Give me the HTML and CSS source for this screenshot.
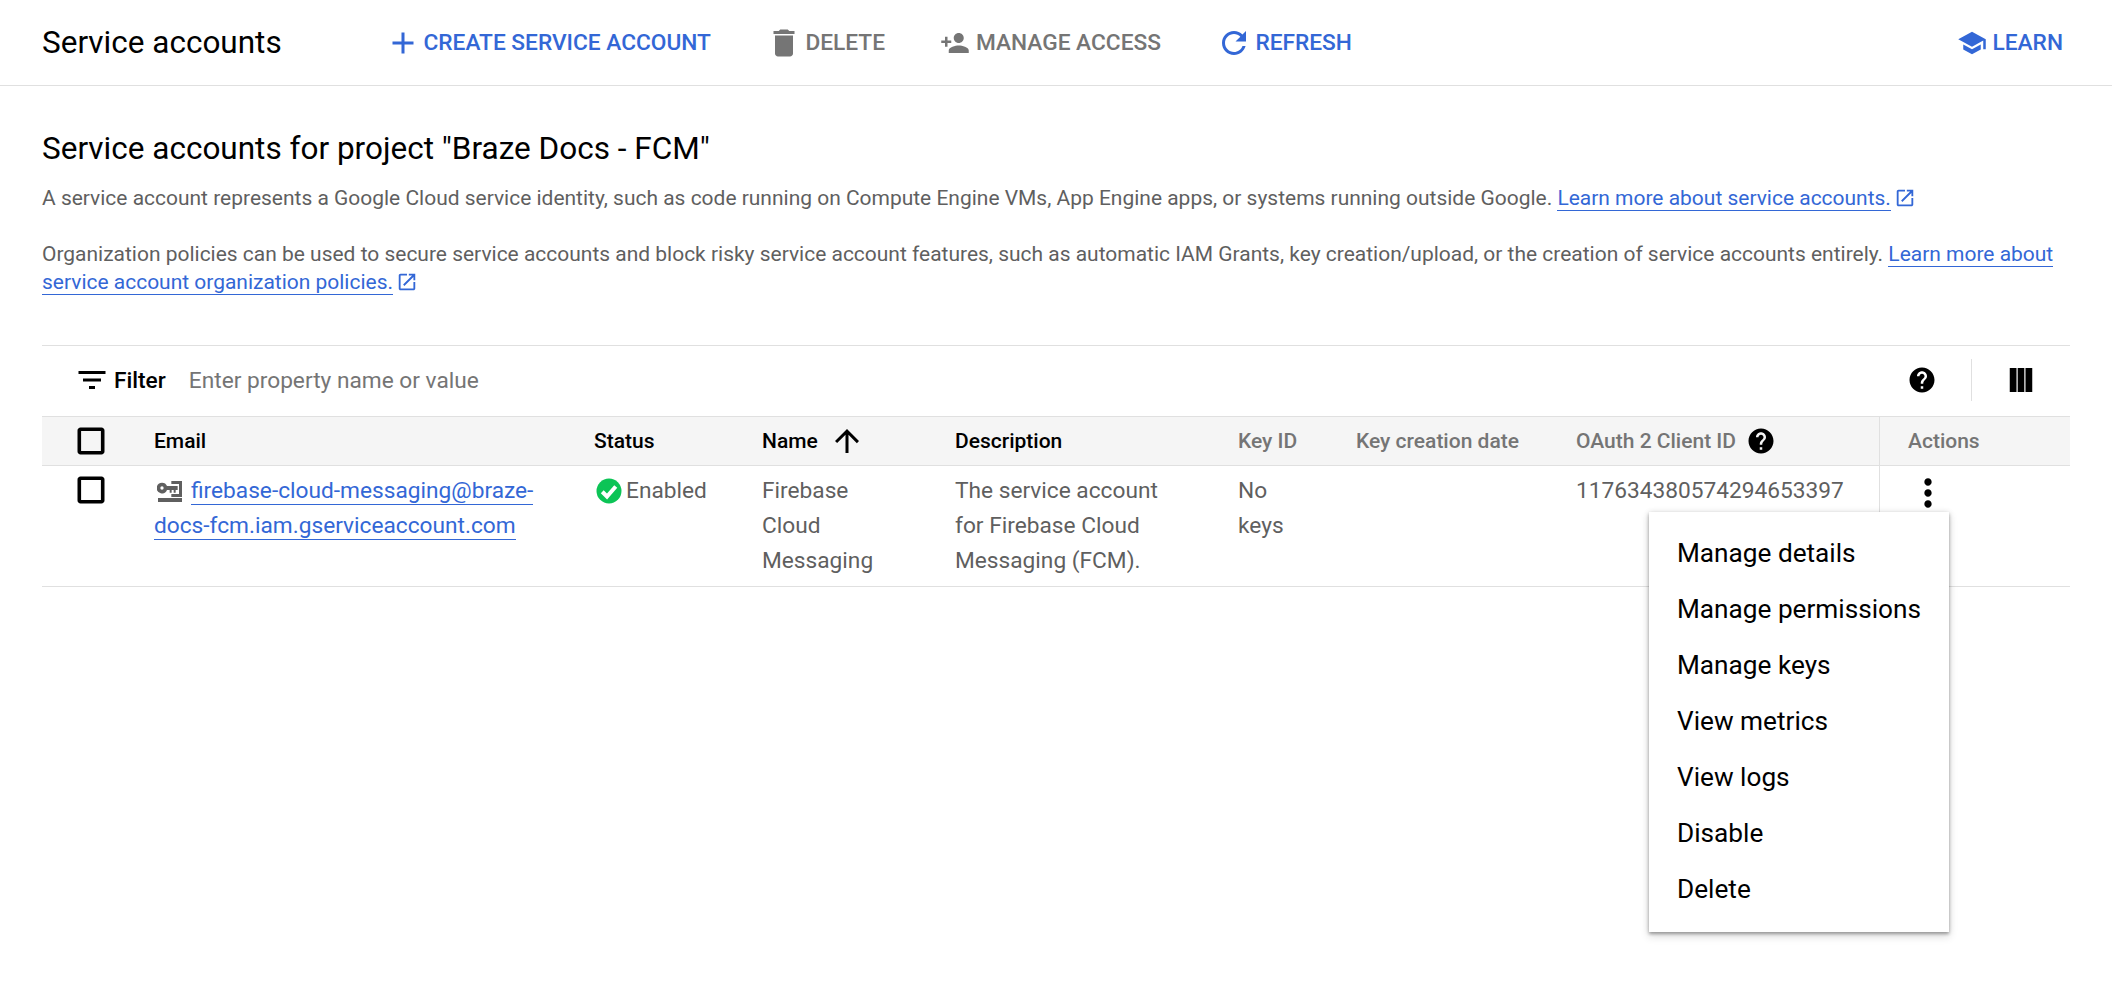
FILE: index.html
```html
<!DOCTYPE html>
<html lang="en">
<head>
    <meta charset="UTF-8">
    <title>Service accounts</title>
    <link rel="stylesheet" href="styles.css">
</head>
<body>
    <!-- top toolbar -->
    <header class="toolbar">
        <h1 class="page-title">Service accounts</h1>
        <div class="actions">
            <a class="btn blue add"><svg class="ic" viewBox="0 0 24 24"><path d="M19 13h-6v6h-2v-6H5v-2h6V5h2v6h6v2z"/></svg>CREATE SERVICE ACCOUNT</a>
            <a class="btn grey"><svg class="ic" viewBox="0 0 24 24"><path d="M6 19c0 1.1.9 2 2 2h8c1.1 0 2-.9 2-2V7H6v12zM19 4h-3.5l-1-1h-5l-1 1H5v2h14V4z"/></svg>DELETE</a>
            <a class="btn grey small"><svg class="ic" viewBox="0 0 24 24"><path d="M15 12c2.21 0 4-1.79 4-4s-1.79-4-4-4-4 1.79-4 4 1.79 4 4 4zm-9-2V7H4v3H1v2h3v3h2v-3h3v-2H6zm9 4c-2.67 0-8 1.34-8 4v2h16v-2c0-2.66-5.33-4-8-4z"/></svg>MANAGE ACCESS</a>
            <a class="btn blue"><svg class="ic" viewBox="0 0 24 24"><path d="M17.65 6.35C16.2 4.9 14.21 4 12 4c-4.42 0-7.99 3.58-7.99 8s3.57 8 7.99 8c3.73 0 6.84-2.55 7.73-6h-2.08c-.82 2.33-3.04 4-5.65 4-3.31 0-6-2.69-6-6s2.69-6 6-6c1.66 0 3.14.69 4.22 1.78L13 11h7V4l-2.35 2.35z"/></svg>REFRESH</a>
        </div>
        <a class="btn blue small learn"><svg class="ic" viewBox="0 0 24 24"><path d="M5 13.18v4L12 21l7-3.82v-4L12 17l-7-3.82zM12 3L1 9l11 6 9-4.91V17h2V9L12 3z"/></svg>LEARN</a>
    </header>

    <main class="content">
        <h2 class="section-title">Service accounts for project "Braze Docs - FCM"</h2>
        <p class="intro">A service account represents a Google Cloud service identity, such as code running on Compute Engine VMs, App Engine apps, or systems running outside Google. <a class="link">Learn more about service accounts.</a><svg class="ic-ext" viewBox="0 0 24 24"><path d="M19 19H5V5h7V3H5c-1.11 0-2 .9-2 2v14c0 1.1.89 2 2 2h14c1.1 0 2-.9 2-2v-7h-2v7zM14 3v2h3.59l-9.83 9.83 1.41 1.41L19 6.41V10h2V3h-7z"/></svg></p>
        <p class="intro">Organization policies can be used to secure service accounts and block risky service account features, such as automatic IAM Grants, key creation/upload, or the creation of service accounts entirely. <a class="link">Learn more about service account organization policies.</a><svg class="ic-ext" viewBox="0 0 24 24"><path d="M19 19H5V5h7V3H5c-1.11 0-2 .9-2 2v14c0 1.1.89 2 2 2h14c1.1 0 2-.9 2-2v-7h-2v7zM14 3v2h3.59l-9.83 9.83 1.41 1.41L19 6.41V10h2V3h-7z"/></svg></p>

        <!-- table -->
        <section class="table">
            <div class="filter">
                <svg class="ic" viewBox="0 0 24 24"><path d="M10 18h4v-2h-4v2zM3 6v2h18V6H3zm3 7h12v-2H6v2z"/></svg>
                <span class="filter-label">Filter</span>
                <span class="filter-input">Enter property name or value</span>
                <svg class="ic help" viewBox="0 0 24 24"><path d="M12 2C6.48 2 2 6.48 2 12s4.48 10 10 10 10-4.48 10-10S17.52 2 12 2zm1 17h-2v-2h2v2zm2.07-7.75l-.9.92C13.45 12.9 13 13.5 13 15h-2v-.5c0-1.1.45-2.1 1.17-2.83l1.24-1.26c.37-.36.59-.86.59-1.41 0-1.1-.9-2-2-2s-2 .9-2 2H8c0-2.21 1.79-4 4-4s4 1.79 4 4c0 .88-.36 1.68-.93 2.25z"/></svg>
                <span class="filter-sep"></span>
                <svg class="ic columns" viewBox="0 0 24 24"><path d="M4.5 4H9v16H4.5zM9.8 4h4.4v16H9.8zM15 4h4.5v16H15z"/></svg>
            </div>

            <div class="row head">
                <div class="cell check"><svg class="ic" viewBox="0 0 24 24"><path d="M18.6 5.4v13.2H5.4V5.4h13.2m.4-2.4H5c-1.1 0-2 .9-2 2v14c0 1.1.9 2 2 2h14c1.1 0 2-.9 2-2V5c0-1.1-.9-2-2-2z"/></svg></div>
                <div class="cell">Email</div>
                <div class="cell">Status</div>
                <div class="cell">Name<svg class="ic sort" viewBox="0 0 24 24"><path d="M4 12l1.41 1.41L11 7.83V20h2V7.83l5.58 5.59L20 12l-8-8-8 8z"/></svg></div>
                <div class="cell">Description</div>
                <div class="cell off">Key ID</div>
                <div class="cell off">Key creation date</div>
                <div class="cell off">OAuth 2 Client ID<svg class="ic tip" viewBox="0 0 24 24"><path d="M12 2C6.48 2 2 6.48 2 12s4.48 10 10 10 10-4.48 10-10S17.52 2 12 2zm1 17h-2v-2h2v2zm2.07-7.75l-.9.92C13.45 12.9 13 13.5 13 15h-2v-.5c0-1.1.45-2.1 1.17-2.83l1.24-1.26c.37-.36.59-.86.59-1.41 0-1.1-.9-2-2-2s-2 .9-2 2H8c0-2.21 1.79-4 4-4s4 1.79 4 4c0 .88-.36 1.68-.93 2.25z"/></svg></div>
                <div class="cell off sticky">Actions</div>
            </div>

            <div class="row body">
                <div class="cell check"><svg class="ic" viewBox="0 0 24 24"><path d="M18.6 5.4v13.2H5.4V5.4h13.2m.4-2.4H5c-1.1 0-2 .9-2 2v14c0 1.1.9 2 2 2h14c1.1 0 2-.9 2-2V5c0-1.1-.9-2-2-2z"/></svg></div>
                <div class="cell email"><svg class="ic-key" viewBox="0 0 75 63"><path fill-rule="evenodd" d="M15 5a16 16 0 0 1 15 10h32v12h-6v8h-6v-8h-6v8h-6v-8H30A16 16 0 1 1 15 5zm0 11a5 5 0 1 0 0 10 5 5 0 0 0 0-10zM43 0h32v48H43v-9h23V9H43zM3 51h72v12H3z"/></svg><a class="link">firebase-cloud-messaging@braze-docs-fcm.iam.gserviceaccount.com</a></div>
                <div class="cell status"><svg class="ic-ok" viewBox="0 0 24 24"><circle cx="12" cy="12" r="10" fill="#0cc456"/><path d="M6.6 12.6l3.8 3.8 7-8" fill="none" stroke="#fff" stroke-width="3.2"/></svg>Enabled</div>
                <div class="cell name">Firebase Cloud Messaging</div>
                <div class="cell desc">The service account for Firebase Cloud Messaging (FCM).</div>
                <div class="cell keys">No keys</div>
                <div class="cell"></div>
                <div class="cell">117634380574294653397</div>
                <div class="cell sticky more"><svg class="ic" viewBox="0 0 24 24"><path d="M12 8c1.1 0 2-.9 2-2s-.9-2-2-2-2 .9-2 2 .9 2 2 2zm0 2c-1.1 0-2 .9-2 2s.9 2 2 2 2-.9 2-2-.9-2-2-2zm0 6c-1.1 0-2 .9-2 2s.9 2 2 2 2-.9 2-2-.9-2-2-2z"/></svg></div>
            </div>
        </section>
    </main>

    <!-- row action menu -->
    <ul class="menu">
        <li>Manage details</li>
        <li>Manage permissions</li>
        <li>Manage keys</li>
        <li>View metrics</li>
        <li>View logs</li>
        <li>Disable</li>
        <li>Delete</li>
    </ul>
</body>
</html>
```

FILE: styles.css
```css
html,body{height:100%;}
body{margin:0;min-height:1000px;background:#fff;font-family:Roboto,"Liberation Sans",sans-serif;color:#000;position:relative;}
h1,h2,p,ul,li{margin:0;padding:0;list-style:none;}
.ic{display:block;width:36px;height:36px;fill:currentColor;flex:none;}

.toolbar{
    display:flex;
    align-items:center;
    height:86px;
    box-sizing:border-box;
    padding:0 42px;
    border-bottom:1px solid #e0e0e0;
}
.page-title{width:342.5px;font-size:31.5px;font-weight:400;}
.actions{display:flex;align-items:center;gap:55px;}
.btn{display:flex;align-items:center;gap:3.5px;font-size:22.7px;font-weight:500;}
.btn.add{gap:3px;}
.btn.small{gap:6px;}
.btn.small .ic{width:30px;height:30px;}
.blue{color:#3367d6;}
.grey{color:#757575;}
.learn{margin-left:auto;margin-right:7px;}

.content{padding:0 42px;}
.section-title{margin-top:45px;font-size:31.5px;line-height:36px;font-weight:400;}
.intro{margin-top:28px;font-size:20.985px;line-height:28px;color:#5f5f5f;}
.section-title + .intro{margin-top:17px;}
.link{color:#3367d6;border-bottom:1px solid #3367d6;}
.ic-ext{display:inline-block;width:22px;height:22px;margin-left:3px;fill:#3367d6;vertical-align:-4px;}

.table{margin-top:49px;}
.filter{
    display:flex;
    align-items:center;
    height:71px;
    box-sizing:border-box;
    padding:0 32px 2px;
    border-top:1px solid #e0e0e0;
}
.filter-label{margin-left:4px;font-size:22.7px;font-weight:500;}
.filter-input{margin-left:23px;font-size:22.7px;color:#757575;}
.help{width:30px;height:30px;margin-left:auto;}
.filter-sep{width:1px;height:42px;margin:0 31px 0 34px;background:#e0e0e0;}
.columns{margin-right:-.5px;}

.row{
    display:grid;
    grid-template-columns:112px 440px 168px 193px 283px 118px 220px 303px 1fr;
    font-size:22.7px;
    line-height:35px;
}
.head{height:50px;box-sizing:border-box;background:#f5f5f5;border-top:1px solid #e0e0e0;border-bottom:1px solid #e0e0e0;font-size:21px;font-weight:500;}
.head .cell{display:flex;align-items:center;}
.body{height:121px;box-sizing:border-box;border-bottom:1px solid #e0e0e0;color:#5f5f5f;}
.body .cell{padding-top:7px;}
.cell.off{color:#757575;}
.head .check,.body .check{padding-left:36px;color:#000;}
.head .check .ic,.body .check .ic{margin-left:-5px;}
.body .check{padding-top:0;}
.body .check .ic{margin-top:6px;}
.sticky{border-left:1px solid #e0e0e0;padding-left:28px;}
.sort{margin-left:11px;}
.tip{width:30px;height:30px;margin-left:10px;color:#000;}
.email{padding-right:30px;}
.name{padding-right:60px;}
.desc{padding-right:50px;}
.keys{padding-right:60px;}
.ic-key{display:inline-block;width:25px;height:21px;fill:#5f5f5f;vertical-align:-4px;margin:0 9px 0 3px;}
.ic-ok{display:inline-block;width:30px;height:30px;vertical-align:-8px;margin-right:2px;}
.status{white-space:nowrap;}
.more{color:#000;}
.body .sticky{padding:0 0 0 26px;}
.more .ic{width:44px;height:44px;margin-top:5px;}

.menu{
    position:absolute;
    left:1649px;
    top:512px;
    width:300px;
    box-sizing:border-box;
    padding:13px 0 15px;
    background:#fff;
    box-shadow:0 2px 3px rgba(0,0,0,.3),0 4px 8px 1px rgba(0,0,0,.12),0 0 6px rgba(0,0,0,.1);
}
.menu li{height:56px;line-height:56px;padding-left:28px;font-size:26.2px;}
```
